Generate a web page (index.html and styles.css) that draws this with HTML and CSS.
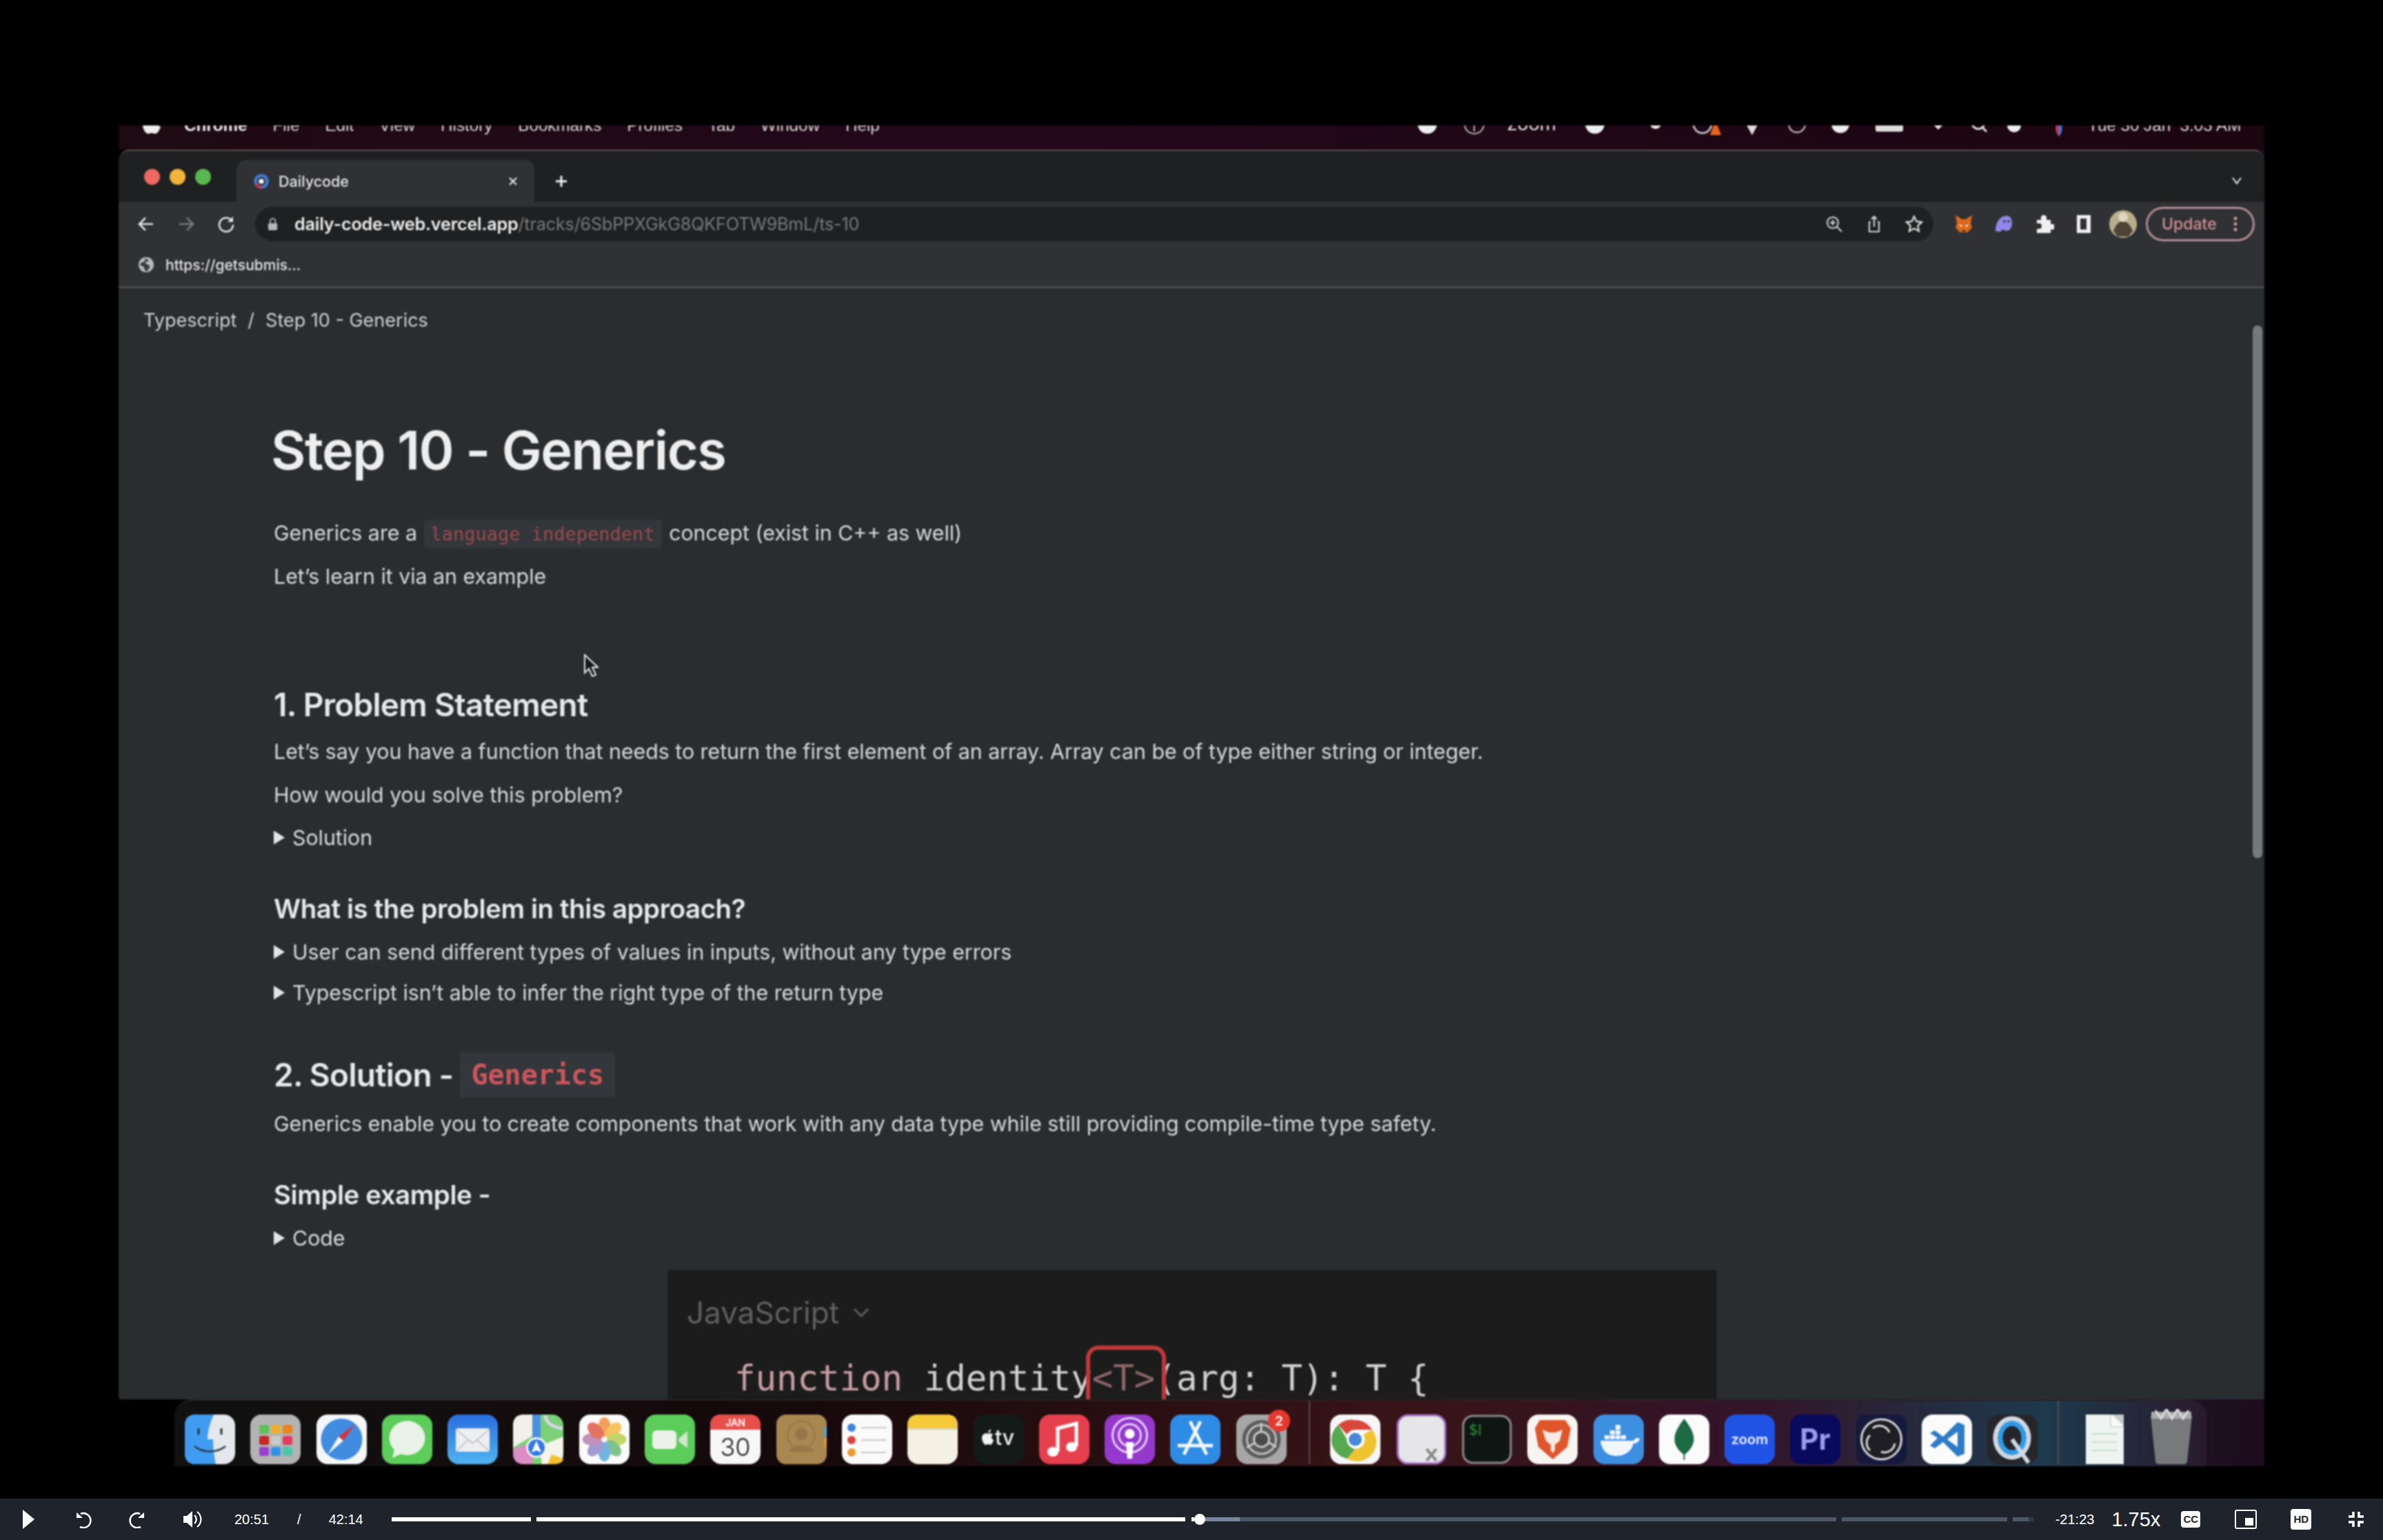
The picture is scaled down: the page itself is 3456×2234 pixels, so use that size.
FILE: index.html
```html
<!DOCTYPE html>
<html lang="en">

<head>
    <meta charset="utf-8">
    <title>Dailycode - Step 10 - Generics</title>
    <link rel="stylesheet" href="styles.css">
</head>

<body>
    <div class="video">
        <div class="screen">
            <div class="menubar">
                <svg class="apple" viewBox="0 0 28 34"><path d="M14 9c3-2 8-2 11 2-4 3-3 9 2 11-2 6-5 10-8 10-2 0-3-1-5-1s-3 1-5 1C5 32 1 25 1 19 1 11 8 6 14 9z" fill="#eee"/></svg>
                <div class="menu-items">
                    <span class="menu-strong">Chrome</span><span>File</span><span>Edit</span><span>View</span><span>History</span><span>Bookmarks</span><span>Profiles</span><span>Tab</span><span>Window</span><span>Help</span>
                </div>
                <svg class="status-icons" viewBox="0 0 1244 34">
                    <circle cx="30" cy="-2" r="14" fill="#eee"/>
                    <circle cx="98" cy="-2" r="14" fill="none" stroke="#bbb" stroke-width="2"/>
                    <path d="M98-4v13" stroke="#bbb" stroke-width="2"/>
                    <text x="146" y="7" class="status-zoom">zoom</text>
                    <ellipse cx="273" cy="-2" rx="14" ry="14" fill="#eee"/>
                    <circle cx="361" cy="-3" r="8" fill="#eee"/>
                    <circle cx="429" cy="-2" r="13" fill="none" stroke="#bbb" stroke-width="3"/>
                    <path d="M440 14l8-22 8 22z" fill="#e8641e"/>
                    <path d="M490-6h22l-11 20z" fill="#ddd"/>
                    <circle cx="566" cy="-2" r="12" fill="none" stroke="#ccc" stroke-width="2"/>
                    <path d="M566-8v8" stroke="#ccc" stroke-width="3"/>
                    <circle cx="629" cy="-2" r="13" fill="#eee"/>
                    <rect x="680" y="-10" width="40" height="19" rx="3" fill="#ddd"/>
                    <path d="M771-6l6 6-6 6-6-6z" fill="#eee"/>
                    <circle cx="829" cy="-4" r="9" fill="none" stroke="#ddd" stroke-width="3"/>
                    <path d="M834 2l7 7" stroke="#ddd" stroke-width="3"/>
                    <circle cx="881" cy="0" r="10" fill="#eee"/>
                    <circle cx="895" cy="-4" r="3" fill="#e8941e"/>
                    <path d="M946-8a14 16 0 0 0 0 24z" fill="#c33c5e"/>
                    <path d="M946-8a14 16 0 0 1 0 24z" fill="#3c78d8"/>
                    <text x="988" y="8" class="status-text">Tue 30 Jan&#160;&#160;3:03 AM</text>
                </svg>
            </div>

            <div class="window">
                <div class="tabstrip">
                    <div class="lights">
                        <span class="light light-red"></span>
                        <span class="light light-yellow"></span>
                        <span class="light light-green"></span>
                    </div>
                    <div class="tab">
                        <svg class="favicon" viewBox="0 0 20 20">
                            <circle cx="10" cy="10" r="7" fill="none" stroke="#3f78c9" stroke-width="4"/>
                            <path d="M10 17a7 7 0 0 1-6-4" fill="none" stroke="#c2334d" stroke-width="4"/>
                            <circle cx="10" cy="10" r="3" fill="#fff"/>
                        </svg>
                        <span class="tab-title">Dailycode</span>
                        <svg class="tab-close" viewBox="0 0 14 14"><path d="M2 2l10 10M12 2L2 12" stroke="#e8e8e8" stroke-width="2"/></svg>
                    </div>
                    <svg class="tab-new" viewBox="0 0 20 20"><path d="M10 2v16M2 10h16" stroke="#f2f2f2" stroke-width="3"/></svg>
                    <svg class="tab-list" viewBox="0 0 16 12"><path d="M2 2l6 8 6-8" fill="none" stroke="#eee" stroke-width="2"/></svg>
                </div>

                <div class="toolbar">
                    <svg class="nav-icon" viewBox="0 0 26 26"><path d="M23 13H4M12 4l-9 9 9 9" fill="none" stroke="#e2e2e2" stroke-width="2.6"/></svg>
                    <svg class="nav-icon" viewBox="0 0 26 26"><path d="M3 13h19M14 4l9 9-9 9" fill="none" stroke="#77797c" stroke-width="2.6"/></svg>
                    <svg class="nav-icon" viewBox="0 0 26 26"><path d="M21 8a10 10 0 1 0 2 6" fill="none" stroke="#e2e2e2" stroke-width="2.6"/><path d="M23 2v8h-8z" fill="#e2e2e2"/></svg>
                    <div class="omnibox">
                        <svg class="lock" viewBox="0 0 16 20"><rect x="1" y="8" width="14" height="11" rx="2" fill="#b4b5b7"/><path d="M4 8V5a4 4 0 0 1 8 0v3" fill="none" stroke="#b4b5b7" stroke-width="2"/></svg>
                        <span class="url"><span class="url-host">daily-code-web.vercel.app</span>/tracks/6SbPPXGkG8QKFOTW9BmL/ts-10</span>
                        <svg class="omni-icon" viewBox="0 0 26 26"><circle cx="11" cy="11" r="8" fill="none" stroke="#d0d0d0" stroke-width="2.2"/><path d="M17 17l7 7M11 7v8M7 11h8" stroke="#d0d0d0" stroke-width="2.2"/></svg>
                        <svg class="omni-icon" viewBox="0 0 26 26"><path d="M8 10H6v14h14V10h-2M13 17V2M9 6l4-4 4 4" fill="none" stroke="#d0d0d0" stroke-width="2.2"/></svg>
                        <svg class="omni-icon" viewBox="0 0 26 26"><path d="M13 2l3.4 7.2 7.6 1-5.6 5.300 1.500 7.800L13 19.500 6.100 23.300l1.500-7.800L2 10.200l7.600-1z" fill="none" stroke="#d8d8d8" stroke-width="2.400"/></svg>
                    </div>
                    <svg class="ext-icon ext-first" viewBox="0 0 30 30"><path d="M3 2l9 6h6l9-6-2 12 2 6-6 7h-12l-6-7 2-6z" fill="#d9691f"/><path d="M8 15l5 2-2 3zM22 15l-5 2 2 3z" fill="#fbe0c4"/><path d="M12 24h6l-3 3z" fill="#3a2a20"/></svg>
                    <svg class="ext-icon" viewBox="0 0 30 30"><path d="M3 25C3 12 10 3 19 3c6 0 8 5 8 11 0 8-5 11-9 11-1 0-2-2-4-2s-2 3-5 3c-2 0-3 0-6-1z" fill="#8f88e8"/><circle cx="16" cy="11" r="1.800" fill="#2f3033"/><circle cx="22" cy="11" r="1.800" fill="#2f3033"/></svg>
                    <svg class="ext-icon" viewBox="0 0 30 30"><path d="M5 9h6V6a4 4 0 0 1 8 0v3h6v6h3a4 4 0 0 1 0 8h-3v5H5v-6h3a4 4 0 0 0 0-8H5z" fill="#f0f0f0"/></svg>
                    <svg class="ext-icon" viewBox="0 0 30 30"><rect x="5" y="2" width="20" height="26" fill="#f0f0f0"/><rect x="10" y="7" width="9" height="16" fill="#303134"/></svg>
                    <svg class="avatar" viewBox="0 0 40 40"><circle cx="20" cy="20" r="20" fill="#b9ae8c"/><path d="M6 30c4-10 8-14 14-14s10 5 14 14l-6 8H12z" fill="#4d4437"/><circle cx="20" cy="10" r="7" fill="#ded6bd"/></svg>
                    <div class="update-pill">
                        <span>Update</span>
                        <svg class="update-dots" viewBox="0 0 6 24"><circle cx="3" cy="4" r="2.400" fill="#cf9c9e"/><circle cx="3" cy="12" r="2.400" fill="#cf9c9e"/><circle cx="3" cy="20" r="2.400" fill="#cf9c9e"/></svg>
                    </div>
                </div>

                <div class="bookmarks">
                    <svg class="globe" viewBox="0 0 24 24"><circle cx="12" cy="12" r="11" fill="#b9babc"/><path d="M9 2c3 3 1 5-1 6S3 9 3 13c3 0 5 1 6 4s2 4 4 5c1-3 5-5 4-8s-5-2-6-4 3-3 5-3c-2-3-4-4-7-4z" fill="#3a3b3e"/></svg>
                    <span class="bookmark-text">https://getsubmis...</span>
                </div>

                <main class="page">
                    <div class="crumbs"><span>Typescript</span><span class="crumb-sep">/</span><span>Step 10 - Generics</span></div>

                    <h1 class="title">Step 10 - Generics</h1>
                    <p class="line intro">Generics are a <code class="inline-code">language independent</code> concept (exist in C++ as well)</p>
                    <p class="line tight">Let’s learn it via an example</p>

                    <h2 class="heading heading-first">1. Problem Statement</h2>
                    <p class="line after-heading">Let’s say you have a function that needs to return the first element of an array. Array can be of type either string or integer.</p>
                    <p class="line tight">How would you solve this problem?</p>
                    <div class="toggle line"><span class="caret"></span>Solution</div>

                    <h3 class="subheading">What is the problem in this approach?</h3>
                    <div class="toggle toggle-first"><span class="caret"></span>User can send different types of values in inputs, without any type errors</div>
                    <div class="toggle toggle-next"><span class="caret"></span>Typescript isn’t able to infer the right type of the return type</div>

                    <h2 class="heading heading-code">2. Solution - <code class="heading-code-chip">Generics</code></h2>
                    <p class="line after-heading">Generics enable you to create components that work with any data type while still providing compile-time type safety.</p>

                    <h3 class="subheading">Simple example -</h3>
                    <div class="toggle toggle-first"><span class="caret"></span>Code</div>

                    <div class="shot">
                        <div class="shot-lang">JavaScript
                            <svg class="shot-chevron" viewBox="0 0 24 14"><path d="M2 2l10 10L22 2" fill="none" stroke="#5f5f5f" stroke-width="3"/></svg>
                        </div>
                        <div class="shot-code"><span class="kw">function</span> identity<span class="generic">&lt;T&gt;</span>(arg: T): T {<span class="shot-mark"></span></div>
                    </div>

                    <svg class="pointer" viewBox="0 0 22 34"><path d="M2 2v26l6-6 5 11 5-2-5-11h8z" fill="#15171a" stroke="#e6e6e6" stroke-width="2"/></svg>
                </main>

                <div class="scrollbar"></div>
            </div>

            <div class="dock">
                <svg class="app" viewBox="0 0 73 72"><rect width="73" height="72" rx="16" fill="#e4e7ec"/><path d="M16 0h26c-6 14-9 24-9 36h8c0 14 2 26 4 36H16Q0 72 0 56V16Q0 0 16 0z" fill="#3f9cf0"/><path d="M20 20v9M53 20v9" stroke="#25303c" stroke-width="3"/><path d="M14 46c12 10 33 10 45 0" fill="none" stroke="#2a3a4c" stroke-width="2.500"/></svg>
                <svg class="app" viewBox="0 0 73 72"><rect width="73" height="72" rx="16" fill="#b3b3b3"/><rect x="13" y="15" width="14" height="13" rx="3" fill="#5cc255"/><rect x="30" y="15" width="14" height="13" rx="3" fill="#eeb02c"/><rect x="47" y="15" width="14" height="13" rx="3" fill="#e8851f"/><rect x="13" y="31" width="14" height="13" rx="3" fill="#c8261e"/><rect x="30" y="31" width="14" height="13" rx="3" fill="#c9c9c9"/><rect x="47" y="31" width="14" height="13" rx="3" fill="#e23b62"/><rect x="13" y="47" width="14" height="13" rx="3" fill="#9a3fd0"/><rect x="30" y="47" width="14" height="13" rx="3" fill="#2f94e8"/><rect x="47" y="47" width="14" height="13" rx="3" fill="#4ec7a8"/></svg>
                <svg class="app" viewBox="0 0 73 72"><rect width="73" height="72" rx="16" fill="#f4f6f8"/><circle cx="36.500" cy="36" r="30" fill="#3f8ce0"/><path d="M32 32l24-18-17 24z" fill="#d8343c"/><path d="M32 32L16 58l23-20z" fill="#f4f4f4"/></svg>
                <svg class="app" viewBox="0 0 73 72"><rect width="73" height="72" rx="16" fill="#5ccc5a"/><ellipse cx="36.500" cy="34" rx="26" ry="25" fill="#e8f2e6"/><path d="M18 50l-3 13 13-6z" fill="#e8f2e6"/></svg>
                <svg class="app" viewBox="0 0 73 72"><defs><linearGradient id="mailBg" x1="0" y1="0" x2="0" y2="1"><stop offset="0" stop-color="#2a6ee0"/><stop offset="1" stop-color="#4fb4f0"/></linearGradient></defs><rect width="73" height="72" rx="16" fill="url(#mailBg)"/><rect x="12" y="20" width="49" height="34" rx="3" fill="#eceef0"/><path d="M13 22l23.500 20L60 22M13 53l17-16M60 53L43 37" fill="none" stroke="#b9bec4" stroke-width="1.500"/></svg>
                <svg class="app" viewBox="0 0 73 72"><rect width="73" height="72" rx="16" fill="#7cd178"/><path d="M0 16Q0 0 16 0h14v30L0 48z" fill="#f2f0e8"/><path d="M0 50l30-10-2 32H16Q0 72 0 56z" fill="#dd8cc4"/><path d="M42 72l-4-26 35-14v24Q73 72 57 72z" fill="#f5f3ea"/><path d="M50 72l6-14 17 6q-1 8-15 8z" fill="#f1c230"/><path d="M28 0h12v36H28z" fill="#4a8fe0"/><path d="M47 1c0 10 10 18 25 19" fill="none" stroke="#d9d4e8" stroke-width="5"/><circle cx="34" cy="48" r="15" fill="#f6f6f6"/><circle cx="34" cy="48" r="12" fill="#2f7ae4"/><path d="M34 38l7 17-7-3-7 3z" fill="#fff"/></svg>
                <svg class="app" viewBox="0 0 73 72"><rect width="73" height="72" rx="16" fill="#fbfbfb"/><g opacity=".82"><ellipse cx="36.500" cy="18" rx="9" ry="14" fill="#ef8f35"/><ellipse cx="36.500" cy="18" rx="9" ry="14" fill="#f4b93a" transform="rotate(45 36.500 36)"/><ellipse cx="36.500" cy="18" rx="9" ry="14" fill="#b7cf4c" transform="rotate(90 36.500 36)"/><ellipse cx="36.500" cy="18" rx="9" ry="14" fill="#64b772" transform="rotate(135 36.500 36)"/><ellipse cx="36.500" cy="18" rx="9" ry="14" fill="#56a6d8" transform="rotate(180 36.500 36)"/><ellipse cx="36.500" cy="18" rx="9" ry="14" fill="#8f86c8" transform="rotate(225 36.500 36)"/><ellipse cx="36.500" cy="18" rx="9" ry="14" fill="#b97aa8" transform="rotate(270 36.500 36)"/><ellipse cx="36.500" cy="18" rx="9" ry="14" fill="#e2553f" transform="rotate(315 36.500 36)"/></g></svg>
                <svg class="app" viewBox="0 0 73 72"><rect width="73" height="72" rx="16" fill="#5ccc5a"/><rect x="11" y="23" width="35" height="27" rx="6" fill="#ecf2ea"/><path d="M49 35l13-11v25L49 39z" fill="#cfe6cb"/></svg>
                <svg class="app" viewBox="0 0 73 72"><rect width="73" height="72" rx="16" fill="#f7f7f7"/><path d="M0 22V16Q0 0 16 0h41q16 0 16 16v6z" fill="#e5504a"/><text x="36.500" y="17" class="cal-month">JAN</text><text x="36.500" y="60" class="cal-day">30</text></svg>
                <svg class="app" viewBox="0 0 73 72"><rect width="73" height="72" rx="14" fill="#a98750"/><rect x="69" y="18" width="4" height="14" fill="#4fa4e0"/><rect x="69" y="34" width="4" height="14" fill="#e0923a"/><circle cx="36" cy="30" r="20" fill="none" stroke="#97774a" stroke-width="2"/><circle cx="36" cy="28" r="9" fill="#97774a"/><path d="M18 54c3-12 33-12 36 0z" fill="#97774a"/></svg>
                <svg class="app" viewBox="0 0 73 72"><rect width="73" height="72" rx="16" fill="#fafafa"/><circle cx="14" cy="19" r="6" fill="#3f82e0"/><circle cx="14" cy="37" r="6" fill="#d8453c"/><circle cx="14" cy="55" r="6" fill="#ed9a35"/><path d="M28 19h36M28 37h36M28 55h36" stroke="#c6c6c6" stroke-width="2"/></svg>
                <svg class="app" viewBox="0 0 73 72"><rect width="73" height="72" rx="16" fill="#f4f1e4"/><path d="M0 20V16Q0 0 16 0h41q16 0 16 16v4z" fill="#f5c93a"/><path d="M0 21h73" stroke="#d8d4c4" stroke-width="2"/></svg>
                <svg class="app" viewBox="0 0 73 72"><rect width="73" height="72" rx="16" fill="#141a18"/><path d="M21 28c2-1 5-1 7 1-3 2-2 7 1 8-1 4-3 7-5 7-1 0-2-1-3-1s-2 1-3 1c-3 0-6-6-6-10 0-5 5-8 9-6zM21 27c0-3 2-5 4-6 0 3-1 5-4 6z" fill="#f2f2f2"/><text x="31" y="44" class="tv-mark">tv</text></svg>
                <svg class="app" viewBox="0 0 73 72"><rect width="73" height="72" rx="16" fill="#e6404f"/><path d="M27 54V20l27-7v33" fill="none" stroke="#fff" stroke-width="5"/><ellipse cx="20" cy="54" rx="8" ry="7" fill="#fff"/><ellipse cx="47" cy="47" rx="8" ry="7" fill="#fff"/></svg>
                <svg class="app" viewBox="0 0 73 72"><rect width="73" height="72" rx="16" fill="#9339cc"/><circle cx="36.500" cy="30" r="25" fill="none" stroke="#e7cdf4" stroke-width="3"/><circle cx="36.500" cy="30" r="16" fill="none" stroke="#e7cdf4" stroke-width="3"/><circle cx="36.500" cy="28" r="7" fill="#fff"/><path d="M31 40h11l-2 24h-7z" fill="#fff"/></svg>
                <svg class="app" viewBox="0 0 73 72"><rect width="73" height="72" rx="16" fill="#2f8ce4"/><path d="M44 10L20 58M29 10l24 48" stroke="#f2f6fa" stroke-width="5"/><path d="M11 45h51" stroke="#f2f6fa" stroke-width="5"/></svg>
                <svg class="app" viewBox="0 0 73 72"><rect width="73" height="72" rx="16" fill="#a6a6a6"/><circle cx="36.500" cy="36" r="28" fill="#5c5c5c"/><circle cx="36.500" cy="36" r="21" fill="none" stroke="#bcbcbc" stroke-width="3"/><circle cx="36.500" cy="36" r="11" fill="#4a4a4a" stroke="#c8c8c8" stroke-width="3"/><path d="M36 25V12M46 40l12 7M27 41l-12 7" stroke="#c8c8c8" stroke-width="3"/><circle cx="62" cy="9" r="16" fill="#e5392f"/><text x="62" y="16" class="badge-num">2</text></svg>
                <span class="dock-sep dock-sep-first"></span>
                <svg class="app" viewBox="0 0 73 72"><rect width="73" height="72" rx="16" fill="#f6f6f6"/><path d="M36.500 8a28 28 0 0 1 24.200 14H36.500a14 14 0 0 0-12 7L12 15A28 28 0 0 1 36.500 8z" fill="#d9473d"/><path d="M12 15l12.500 21a14 14 0 0 0 12 14L25 64A28 28 0 0 1 12 15z" fill="#57a84f"/><path d="M60.700 22a28 28 0 0 1-35.700 42l11.500-14a14 14 0 0 0 12-21z" fill="#f0c331"/><circle cx="36.500" cy="36" r="11" fill="#4a86d8" stroke="#fff" stroke-width="3"/></svg>
                <svg class="app" viewBox="0 0 73 72"><rect x="2" y="1" width="69" height="70" rx="15" fill="#e6e6e8" stroke="#a06cc0" stroke-width="3"/><path d="M44 50l14 17M58 50L44 67" stroke="#8a8a8a" stroke-width="4"/></svg>
                <svg class="app" viewBox="0 0 73 72"><rect x="2" y="2" width="69" height="68" rx="14" fill="#0e1512" stroke="#8a8a8a" stroke-width="3"/><text x="10" y="29" class="term-prompt">$</text><path d="M26 14v16" stroke="#246a2c" stroke-width="3"/></svg>
                <svg class="app" viewBox="0 0 73 72"><rect width="73" height="72" rx="16" fill="#f8f4f2"/><path d="M18 8h37l8 12-5 27-21 18-21-18-5-27z" fill="#e0562c"/><path d="M22 22l10 4h9l10-4-4 16-7 6v8l-3 4-3-4v-8l-7-6z" fill="#f8e9e2"/></svg>
                <svg class="app" viewBox="0 0 73 72"><rect width="73" height="72" rx="16" fill="#3d8fe0"/><path d="M10 38h48c2-4 6-5 9-3-1 5-5 7-9 7-3 12-13 18-25 18-14 0-21-9-23-22z" fill="#f2f7fc"/><path d="M16 30h7v6h-7zM24 30h7v6h-7zM32 30h7v6h-7zM40 30h7v6h-7zM24 23h7v6h-7zM32 23h7v6h-7zM32 15h7v7h-7z" fill="#f2f7fc"/></svg>
                <svg class="app" viewBox="0 0 73 72"><rect width="73" height="72" rx="16" fill="#fbfbfb"/><path d="M36.500 6c9 12 14 20 14 30s-8 18-13 22v8h-2v-8c-5-4-13-12-13-22S27.500 18 36.500 6z" fill="#1d6a44"/></svg>
                <svg class="app" viewBox="0 0 73 72"><rect width="73" height="72" rx="16" fill="#2052e4"/><text x="36.500" y="43" class="zoom-mark">zoom</text></svg>
                <svg class="app" viewBox="0 0 73 72"><rect width="73" height="72" rx="16" fill="#0a0a5c"/><text x="36.500" y="51" class="pr-mark">Pr</text></svg>
                <svg class="app" viewBox="0 0 73 72"><rect width="73" height="72" rx="14" fill="#15193c"/><circle cx="36.500" cy="36" r="29" fill="#1e1e24" stroke="#d8d8d8" stroke-width="3"/><path d="M24 20a15 15 0 0 1 24 6M56 42a15 15 0 0 1-20 12M20 52a15 15 0 0 1 0-22" fill="none" stroke="#d8d8d8" stroke-width="3"/></svg>
                <svg class="app" viewBox="0 0 73 72"><rect width="73" height="72" rx="16" fill="#fbfbfb"/><path d="M12 27l7-4 12 9 21-21 10 4v42l-10 4-21-21-12 9-7-4 11-11zM52 25L37 36l15 11z" fill="#2f7cc6" fill-rule="evenodd"/></svg>
                <svg class="app" viewBox="0 0 73 72"><rect width="73" height="72" rx="16" fill="#24262a"/><ellipse cx="36" cy="34" rx="24" ry="28" fill="none" stroke="#cfd8e2" stroke-width="7"/><ellipse cx="36" cy="34" rx="17" ry="21" fill="none" stroke="#2f9be8" stroke-width="7"/><path d="M36 36l24 34" stroke="#cfd8e2" stroke-width="6"/></svg>
                <span class="dock-sep dock-sep-second"></span>
                <svg class="app-file" viewBox="0 0 55 72"><rect width="55" height="72" fill="#eef4f0"/><path d="M0 0h38l17 16v-16z" fill="#c8cbcc"/><path d="M36 0v18h19" fill="#f8f8f8" stroke="#c0c0c0"/><path d="M8 28h38M8 40h38M8 52h38" stroke="#c7ded4" stroke-width="2"/></svg>
                <svg class="app-trash" viewBox="0 0 66 80"><path d="M3 10h60l-7 66q-1 4-5 4H15q-4 0-5-4z" fill="#77797b"/><path d="M4 4h58v10H4z" fill="#aaa"/><path d="M10 2l8 12 8-14 8 14 8-14 8 14 8-12" fill="none" stroke="#ddd" stroke-width="3"/></svg>
            </div>
        </div>
    </div>

    <div class="player">
        <svg class="pl-play" viewBox="0 0 17 28"><path d="M0 0l17 14L0 28z" fill="#fff"/></svg>
        <svg class="pl-skip pl-back" viewBox="0 0 26 26"><path d="M3 3l9 8H3z" fill="#fff"/><path d="M9 5a10.500 10.500 0 1 1-1 19" fill="none" stroke="#fff" stroke-width="2.600"/></svg>
        <svg class="pl-skip pl-fwd" viewBox="0 0 26 26"><path d="M23 3l-9 8h9z" fill="#fff"/><path d="M17 5a10.500 10.500 0 1 0 1 19" fill="none" stroke="#fff" stroke-width="2.600"/></svg>
        <svg class="pl-vol" viewBox="0 0 27 26"><path d="M0 8h5l8-7v24l-8-7H0z" fill="#fff"/><path d="M16 7a8 8 0 0 1 0 12M20 2a14 14 0 0 1 0 22" fill="none" stroke="#fff" stroke-width="2.200"/></svg>
        <span class="pl-time pl-elapsed">20:51</span>
        <span class="pl-time pl-slash">/</span>
        <span class="pl-time pl-total">42:14</span>
        <div class="scrub">
            <span class="seg seg-played seg-a"></span>
            <span class="seg seg-played seg-b"></span>
            <span class="seg seg-played seg-c"></span>
            <span class="knob"></span>
            <span class="seg seg-buffered"></span>
            <span class="seg seg-rest seg-d"></span>
            <span class="seg seg-rest seg-e"></span>
            <span class="seg seg-rest seg-f"></span>
            <span class="seg seg-dim"></span>
        </div>
        <span class="pl-time pl-remain">-21:23</span>
        <span class="pl-speed">1.75x</span>
        <span class="pl-cc">CC</span>
        <svg class="pl-pip" viewBox="0 0 32 28"><rect x="1" y="1" width="30" height="26" rx="2" fill="none" stroke="#fff" stroke-width="2"/><rect x="15" y="12" width="12" height="11" fill="#fff"/></svg>
        <span class="pl-hd">HD</span>
        <svg class="pl-full" viewBox="0 0 22 22"><path d="M7 0v7H0M15 0v7h7M7 22v-7H0M15 22v-7h7" fill="none" stroke="#fff" stroke-width="3.500"/></svg>
    </div>
</body>

</html>
```

FILE: styles.css
```css
* {
    box-sizing: border-box;
}

html,
body {
    margin: 0;
    padding: 0;
    background-color: #000;
    width: 3456px;
    height: 2234px;
    overflow: hidden;
    font-family: Inter, "Liberation Sans", sans-serif;
}

.video {
    height: 2174px;
    padding: 182px 172px 0;
}

.screen {
    height: 1945px;
    background: linear-gradient(90deg, #000 0, #000 2%, #1f0a10 20%, #341216 60%, #2a2438 85%, #1c0c1c 100%);
    filter: blur(0.8px);
}

/* menu bar, cut off at the top of the video */
.menubar {
    display: flex;
    height: 35px;
    overflow: hidden;
    background: linear-gradient(90deg, #1d0a12, #23081a 40%, #1b0610);
}

.apple {
    width: 28px;
    height: 34px;
    margin: -20px 0 0 34px;
}

.menu-items {
    display: flex;
    gap: 37px;
    margin: -13px 0 0 33px;
    font-family: "Liberation Sans", Arial, sans-serif;
    font-size: 24.2px;
    line-height: 26px;
    color: #d8d8d8;
}

.menu-strong {
    font-weight: 700;
    color: #eee;
}

.status-icons {
    width: 1244px;
    height: 34px;
    margin-left: auto;
    overflow: hidden;
}

.status-text {
    font-family: "Liberation Sans", Arial, sans-serif;
    font-size: 24.2px;
    fill: #dcdcdc;
}

.status-zoom {
    font-family: "Liberation Sans", Arial, sans-serif;
    font-size: 29px;
    fill: #dcdcdc;
}

/* chrome window */
.window {
    position: relative;
    height: 1813px;
    overflow: hidden;
    background-color: #2a2d30;
    border-top: 2px solid #5a4f50;
    border-radius: 16px 16px 4px 4px;
}

.tabstrip {
    display: flex;
    align-items: flex-end;
    height: 74px;
    background-color: #1f2022;
}

.lights {
    display: flex;
    gap: 14px;
    align-self: flex-start;
    margin: 26px 0 0 37px;
}

.light {
    width: 23px;
    height: 23px;
    border-radius: 50%;
}

.light-red {
    background-color: #ec6a5e;
}

.light-yellow {
    background-color: #f0b33c;
}

.light-green {
    background-color: #57b84f;
}

.tab {
    display: flex;
    align-items: center;
    width: 432px;
    height: 61px;
    margin-left: 37px;
    padding: 0 24px 0 24px;
    background-color: #303134;
    border-radius: 14px 14px 0 0;
    color: #e6e6e6;
}

.favicon {
    width: 24px;
    height: 24px;
}

.tab-title {
    margin-left: 13px;
    font-size: 21.5px;
    font-weight: 500;
}

.tab-close {
    width: 14px;
    height: 14px;
    margin-left: auto;
}

.tab-new {
    width: 20px;
    height: 20px;
    margin: 0 0 20px 29px;
}

.tab-list {
    width: 16px;
    height: 12px;
    margin: 0 32px 25px auto;
}

.toolbar {
    display: flex;
    align-items: center;
    height: 64px;
    padding-left: 27px;
    background-color: #303134;
}

.nav-icon {
    width: 26px;
    height: 26px;
    margin-right: 32px;
}

.omnibox {
    display: flex;
    align-items: center;
    width: 2434px;
    height: 50px;
    margin-left: -3px;
    padding: 0 15px 0 18px;
    background-color: #1f2022;
    border-radius: 25px;
}

.lock {
    width: 15px;
    height: 19px;
}

.url {
    margin-left: 24px;
    font-size: 25.2px;
    font-weight: 400;
    color: #77797c;
    letter-spacing: -0.2px;
}

.url-host {
    color: #ececec;
    font-weight: 600;
}

.omni-icon {
    width: 26px;
    height: 26px;
    margin-left: 32px;
}

.lock + .url + .omni-icon {
    margin-left: auto;
}

.ext-icon {
    width: 30px;
    height: 30px;
    margin-left: 28px;
}

.ext-first {
    margin-left: 29px;
}

.avatar {
    width: 40px;
    height: 46px;
    margin-left: 22px;
}

.update-pill {
    display: flex;
    align-items: center;
    width: 158px;
    height: 50px;
    margin-left: 13px;
    padding: 0 22px 0 20px;
    border: 3px solid #b08d90;
    border-radius: 25px;
    font-size: 23px;
    font-weight: 500;
    color: #cf8f94;
}

.update-dots {
    width: 6px;
    height: 24px;
    margin-left: auto;
}

.bookmarks {
    display: flex;
    align-items: center;
    height: 61px;
    padding: 0 0 4px 28px;
    background-color: #303134;
    border-bottom: 3px solid #4a4b4e;
}

.globe {
    width: 24px;
    height: 26px;
}

.bookmark-text {
    margin-left: 16px;
    font-size: 21px;
    font-weight: 500;
    color: #e4e4e4;
}

/* page content */
.page {
    position: relative;
    padding: 0 0 0 223px;
    color: #d8d9da;
}

.crumbs {
    display: flex;
    gap: 16px;
    margin-left: -187px;
    padding-top: 24px;
    font-size: 27px;
    line-height: 46px;
    color: #cfd0d1;
}

.title {
    margin: 117px 0 0 -2px;
    font-size: 77.5px;
    line-height: 96px;
    font-weight: 600;
    letter-spacing: -1.5px;
    color: #eeeeef;
}

.line {
    margin: 0;
    font-size: 30.3px;
    line-height: 62px;
}

.intro {
    margin: 41px 0 0 2px;
}

.tight {
    margin: 1px 0 0 2px;
}

.after-heading {
    margin: 7px 0 0 2px;
}

.inline-code {
    display: inline-block;
    height: 41px;
    margin: 0 2px 0 1px;
    padding: 0 10px;
    background-color: #33363a;
    border-radius: 4px;
    font-family: "DejaVu Sans Mono", monospace;
    font-size: 27px;
    line-height: 41px;
    color: #9e4a4f;
}

.heading {
    margin: 0 0 0 2px;
    font-size: 46px;
    line-height: 60px;
    font-weight: 600;
    letter-spacing: -0.7px;
    color: #e8e9ea;
}

.heading-first {
    margin-top: 125px;
}

.heading-code {
    display: flex;
    align-items: center;
    gap: 10px;
    margin-top: 57px;
    line-height: 66px;
}

.heading-code-chip {
    height: 65px;
    padding: 0 16px;
    background-color: #33363a;
    border-radius: 4px;
    font-family: "DejaVu Sans Mono", monospace;
    font-size: 40px;
    font-weight: 700;
    line-height: 65px;
    letter-spacing: 0;
    color: #c9575c;
}

.subheading {
    margin: 45px 0 0 2px;
    font-size: 38.4px;
    line-height: 54px;
    font-weight: 600;
    letter-spacing: -0.4px;
    color: #e8e9ea;
}

.toggle {
    display: flex;
    align-items: center;
    margin-left: 2px;
    font-size: 30.3px;
    line-height: 58px;
}

.toggle.line {
    line-height: 62px;
}

.toggle-first {
    margin-top: 7px;
}

.toggle-next {
    margin-top: 1px;
}

.caret {
    width: 0;
    height: 0;
    margin-right: 11px;
    border-style: solid;
    border-width: 10px 0 10px 16px;
    border-color: transparent transparent transparent #e4e4e4;
}

.shot {
    position: relative;
    width: 1522px;
    height: 240px;
    margin: 17px 0 0 573px;
    padding: 36px 28px 0;
    background-color: #1c1c1c;
}

.shot-lang {
    display: flex;
    align-items: center;
    gap: 20px;
    font-size: 44px;
    line-height: 52px;
    color: #5f5f5f;
}

.shot-chevron {
    width: 24px;
    height: 14px;
}

.shot-code {
    position: relative;
    margin: 39px 0 0 69px;
    font-family: "DejaVu Sans Mono", monospace;
    font-size: 50.7px;
    line-height: 62px;
    white-space: pre;
    color: #d0d0d0;
}

.kw {
    color: #c79da4;
}

.generic {
    color: #8c6668;
}

.shot-mark {
    position: absolute;
    left: 510px;
    top: -17px;
    width: 116px;
    height: 120px;
    border: 6px solid #c0383a;
    border-radius: 18px;
}

.pointer {
    position: absolute;
    left: 674px;
    top: 530px;
    width: 22px;
    height: 34px;
}

.scrollbar {
    position: absolute;
    top: 253px;
    right: 3px;
    width: 14px;
    height: 773px;
    background-color: #77797b;
    border-radius: 7px;
}

/* dock */
.dock {
    display: flex;
    align-items: flex-end;
    gap: 22.3px;
    height: 97px;
    margin-left: 81px;
    margin-right: 84px;
    padding: 0 0 3px 15px;
    background: linear-gradient(90deg, #111 0, #15090b 30%, #381416 60%, #33142a 78%, #1d3a4c 92%, #2a1a2c 100%);
    border-radius: 26px 26px 0 0;
    border-top: 2px solid #2a2024;
}

.app {
    flex: none;
    width: 73px;
    height: 72px;
    overflow: visible;
}

.app-file {
    flex: none;
    width: 55px;
    height: 72px;
    margin-left: 11px;
}

.app-trash {
    flex: none;
    width: 66px;
    height: 80px;
    margin-left: 14px;
}

.dock-sep {
    flex: none;
    align-self: stretch;
    width: 2px;
    background-color: #5a4a4c;
}

.dock-sep-first {
    margin: 0 7px 0 10px;
}

.dock-sep-second {
    margin: 0 6px 0 6px;
}

.cal-month {
    font-family: Inter, sans-serif;
    font-size: 14px;
    font-weight: 600;
    text-anchor: middle;
    fill: #fff;
}

.cal-day {
    font-family: Inter, sans-serif;
    font-size: 36px;
    font-weight: 300;
    text-anchor: middle;
    fill: #222;
}

.tv-mark {
    font-family: Inter, sans-serif;
    font-size: 30px;
    font-weight: 500;
    fill: #f2f2f2;
}

.badge-num {
    font-family: Inter, sans-serif;
    font-size: 19px;
    font-weight: 600;
    text-anchor: middle;
    fill: #fff;
}

.term-prompt {
    font-family: "DejaVu Sans Mono", monospace;
    font-size: 22px;
    fill: #2c9a3a;
}

.zoom-mark {
    font-family: Inter, sans-serif;
    font-size: 20px;
    font-weight: 600;
    text-anchor: middle;
    fill: #eaf0ff;
}

.pr-mark {
    font-family: Inter, sans-serif;
    font-size: 42px;
    font-weight: 700;
    text-anchor: middle;
    fill: #9a9af0;
}

/* video player controls */
.player {
    display: flex;
    align-items: center;
    height: 60px;
    padding-left: 33px;
    background-color: #1f242c;
    color: #fff;
    font-family: "Liberation Sans", Arial, sans-serif;
}

.pl-play {
    width: 17px;
    height: 28px;
}

.pl-skip {
    width: 26px;
    height: 26px;
}

.pl-back {
    margin-left: 58px;
}

.pl-fwd {
    margin-left: 52px;
}

.pl-vol {
    width: 27px;
    height: 26px;
    margin-left: 54px;
}

.pl-time {
    font-size: 20px;
}

.pl-elapsed {
    margin-left: 47px;
}

.pl-slash {
    margin-left: 41px;
}

.pl-total {
    margin-left: 40px;
}

.scrub {
    display: flex;
    align-items: center;
    height: 16px;
    margin-left: 41px;
}

.seg {
    height: 6px;
}

.seg-played {
    background-color: #fff;
}

.seg-a {
    width: 202px;
    margin-right: 8px;
}

.seg-b {
    width: 941px;
    margin-right: 9px;
}

.seg-c {
    width: 4px;
}

.knob {
    width: 16px;
    height: 16px;
    background-color: #fff;
    border-radius: 50%;
}

.seg-buffered {
    width: 50px;
    background-color: #7a869c;
}

.seg-rest {
    background-color: #4e5767;
}

.seg-d {
    width: 865px;
    margin-right: 8px;
}

.seg-e {
    width: 240px;
    margin-right: 8px;
}

.seg-f {
    width: 23px;
}

.seg-dim {
    width: 7px;
    background-color: #333a46;
}

.pl-remain {
    margin-left: 32px;
}

.pl-speed {
    margin-left: 25px;
    font-size: 29px;
}

.pl-cc {
    width: 28px;
    height: 24px;
    margin-left: 30px;
    background-color: #fff;
    border-radius: 4px;
    font-size: 15px;
    font-weight: 700;
    line-height: 24px;
    text-align: center;
    color: #1f242c;
}

.pl-pip {
    width: 32px;
    height: 28px;
    margin-left: 50px;
}

.pl-hd {
    width: 30px;
    height: 30px;
    margin-left: 49px;
    background-color: #fff;
    border-radius: 4px;
    font-size: 15px;
    font-weight: 700;
    line-height: 30px;
    text-align: center;
    color: #1f242c;
}

.pl-full {
    width: 22px;
    height: 22px;
    margin-left: 54px;
}
```
